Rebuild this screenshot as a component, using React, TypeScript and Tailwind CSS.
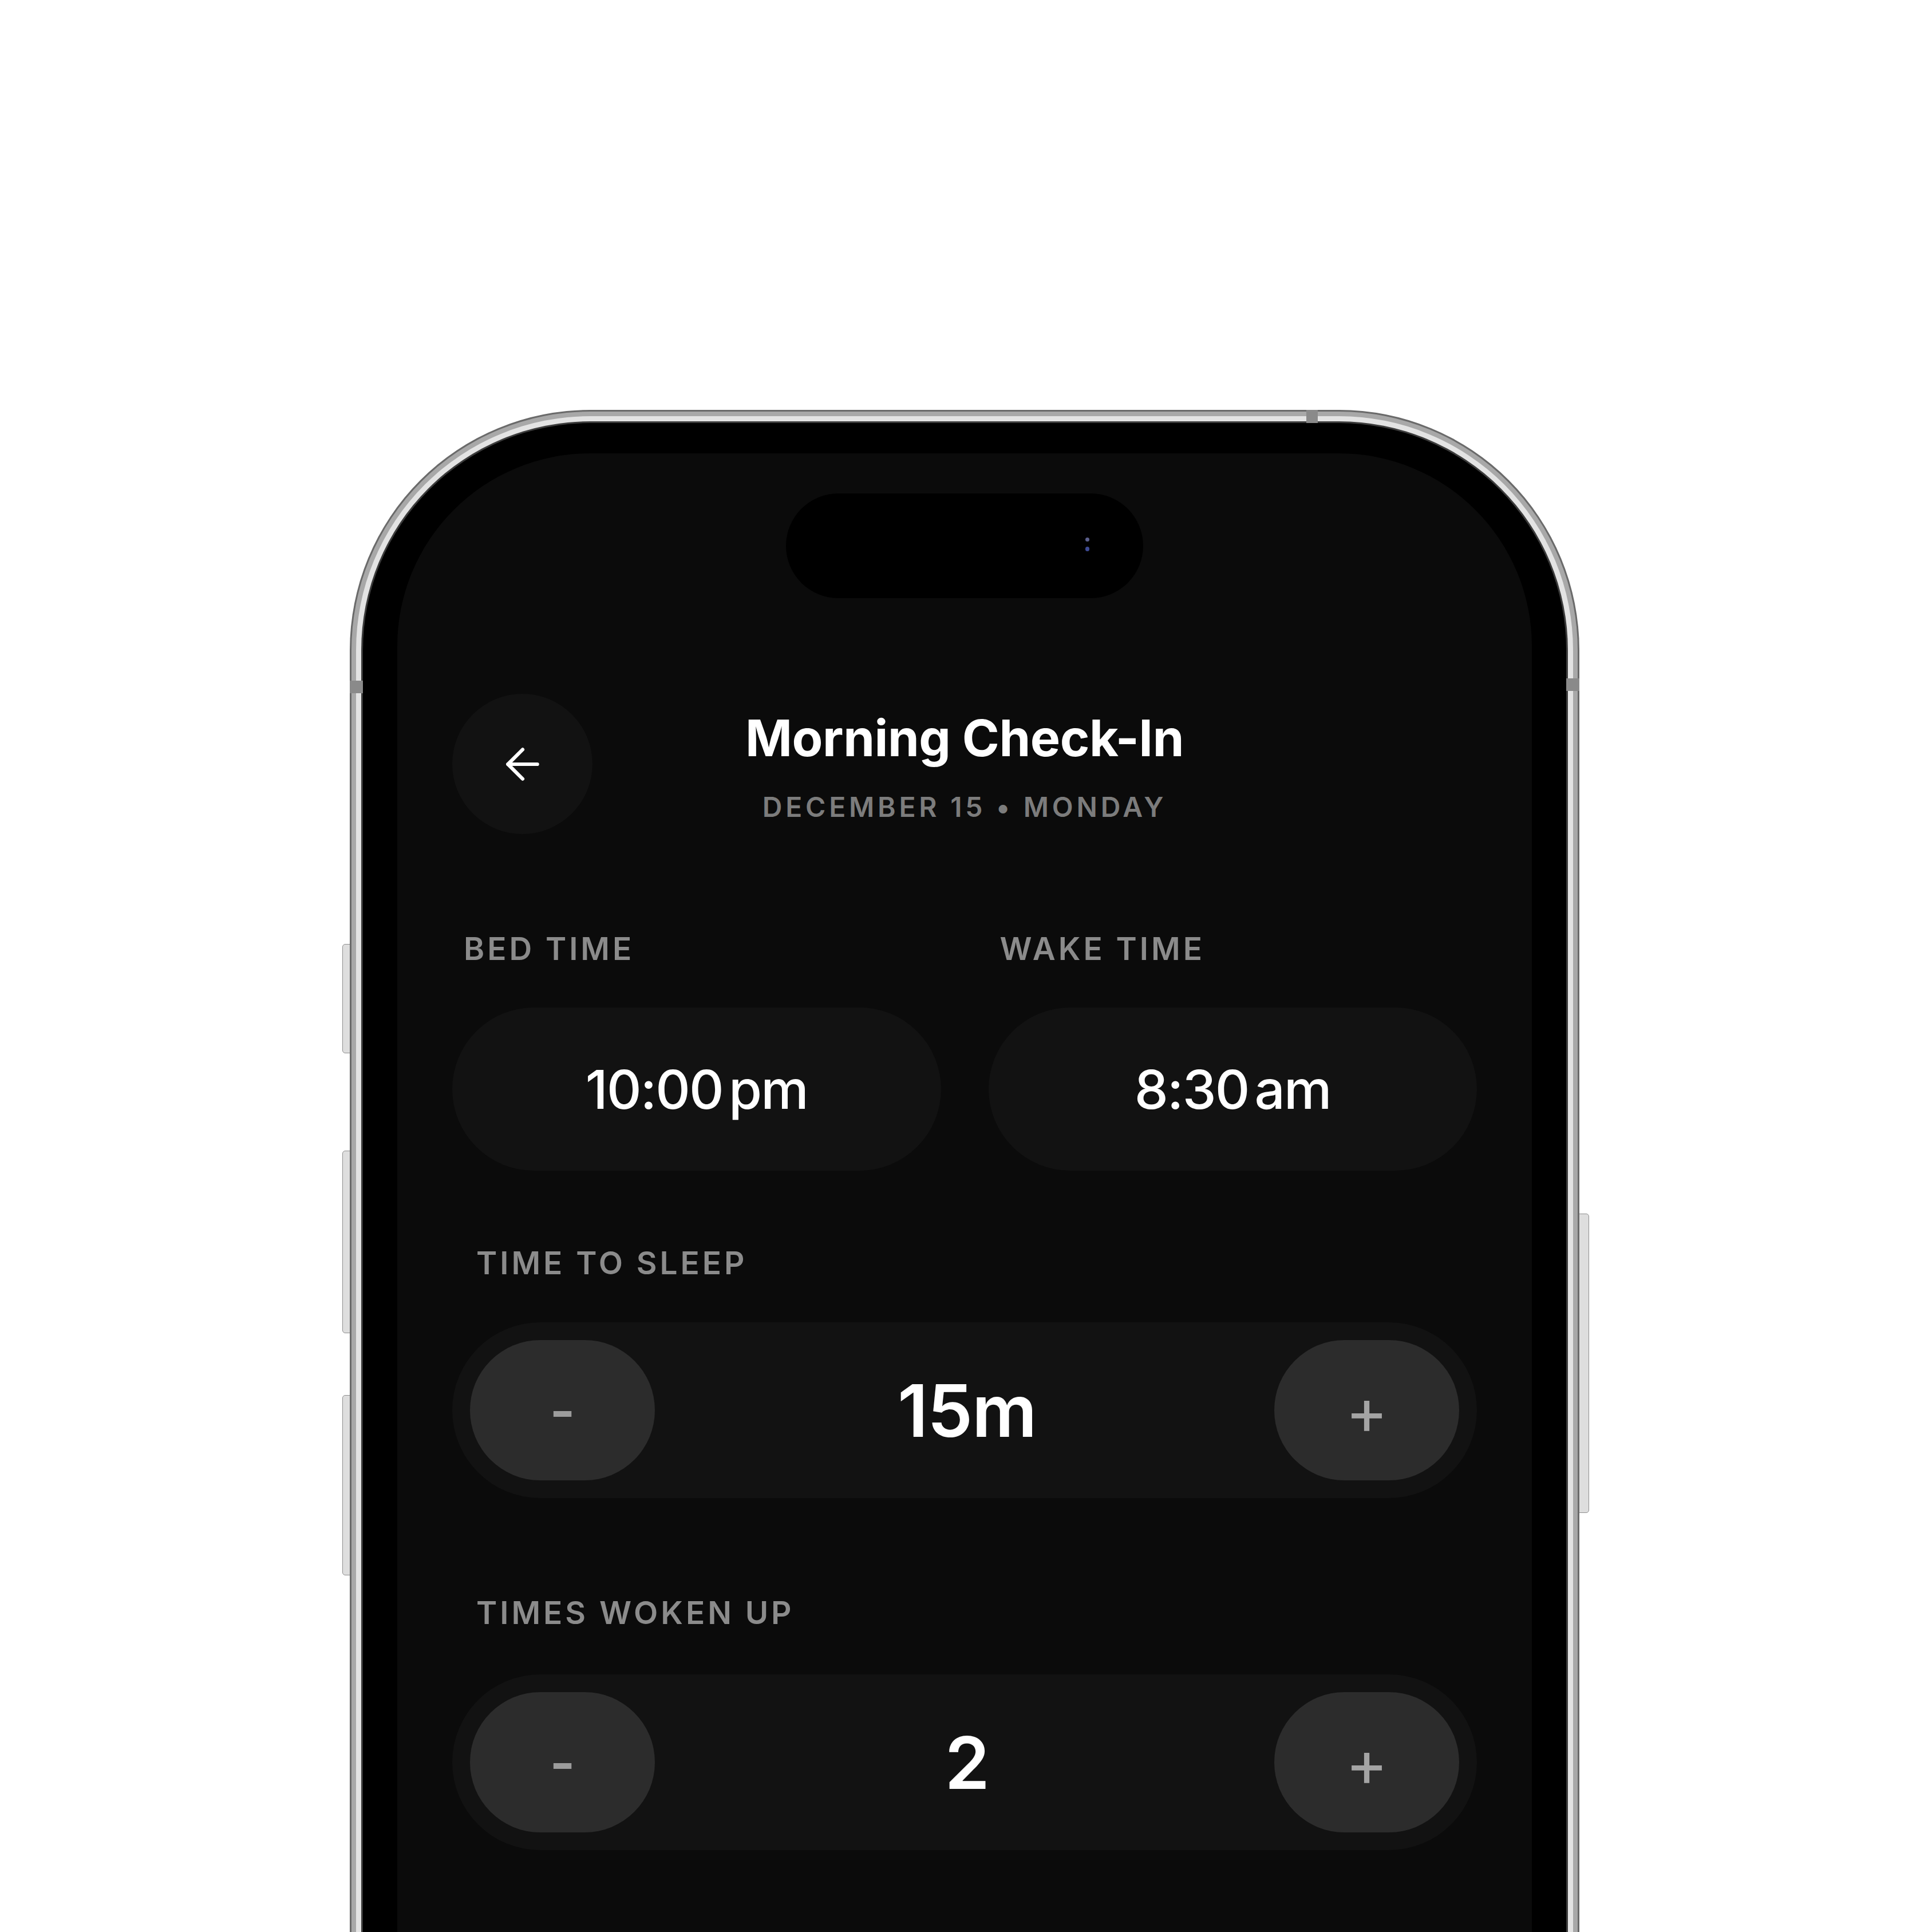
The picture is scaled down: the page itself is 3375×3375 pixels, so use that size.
import { ArrowLeft } from "lucide-react";

const timeSlots = [
  { label: "Bed Time", value: "10:00", suffix: "pm" },
  { label: "Wake Time", value: "8:30", suffix: "am" },
];

const counters = [
  { label: "Time to Sleep", value: "15m" },
  { label: "Times Woken Up", value: "2" },
];

const Stepper = ({ label, value, first }: { label: string; value: string; first: boolean }) => (
  <section className={first ? "mt-[134px]" : "mt-[173px]"}>
    <h3 className="pl-[42px] text-[55px] font-semibold uppercase leading-none tracking-[0.09em] text-[#8b8b8b]">
      {label}
    </h3>
    <div className={`${first ? "mt-[76px]" : "mt-[80px]"} flex h-[307px] items-center justify-between rounded-full bg-[#121212] px-[31px]`}>
      <button className="flex h-[245px] w-[323px] items-center justify-center rounded-full bg-[#2c2c2c] text-[96px] font-semibold leading-none text-[#9c9c9c]">
        -
      </button>
      <span className="pl-[8px] text-[126px] font-semibold leading-none tracking-[-0.01em] text-white">{value}</span>
      <button className="flex h-[245px] w-[323px] items-center justify-center rounded-full bg-[#2c2c2c] text-[112px] font-normal leading-none text-[#a4a4a4]">
        +
      </button>
    </div>
  </section>
);

export default function App() {
  return (
    <div className="h-[3375px] w-[3375px] overflow-hidden bg-white pl-[611px] pt-[716px] font-[Inter,sans-serif]">
      <div className="relative w-[2148px]">
        {/* side buttons */}
        <div className="absolute left-[-13px] top-[933px] h-[191px] w-[15px] rounded-l-[5px] border border-[#8e8e8e] bg-[#dedede]" />
        <div className="absolute left-[-13px] top-[1294px] h-[319px] w-[15px] rounded-l-[5px] border border-[#8e8e8e] bg-[#dedede]" />
        <div className="absolute left-[-13px] top-[1721px] h-[315px] w-[15px] rounded-l-[5px] border border-[#8e8e8e] bg-[#dedede]" />
        <div className="absolute right-[-17px] top-[1404px] h-[523px] w-[19px] rounded-r-[5px] border border-[#8e8e8e] bg-[#dedede]" />

        {/* titanium band */}
        <div className="relative rounded-[420px] bg-[#6a6a6a] p-[3px]">
          <div className="rounded-[417px] bg-[#a8a8a8] p-[8px]">
            <div className="rounded-[409px] bg-[#e3e3e3] p-[9px]">
              <div className="rounded-[400px] bg-[#3c3c3c] p-[3px]">
                <div className="rounded-[397px] bg-black px-[60px] pt-[53px]">
                  <div className="min-h-[3300px] rounded-[337px] bg-[#0b0b0b] px-[96px] pt-[70px]">
                    {/* dynamic island */}
                    <div className="relative mx-auto h-[183px] w-[624px] rounded-full bg-black">
                      <span className="absolute left-[523px] top-[77px] h-[7px] w-[7px] rounded-full bg-[#5b5f8c]" />
                      <span className="absolute left-[523px] top-[93px] h-[8px] w-[7px] rounded-full bg-[#3d4a93]" />
                    </div>

                    <header className="mt-[167px] grid h-[245px] grid-cols-[245px_1fr_245px] items-center">
                      <button className="flex h-[245px] w-[245px] items-center justify-center rounded-full bg-[#121212] text-white">
                        <ArrowLeft size={88} strokeWidth={1.7} />
                      </button>
                      <div className="flex flex-col items-center pt-[10px]">
                        <h1 className="text-[88px] font-bold leading-none tracking-[-0.005em] text-white">
                          Morning Check-In
                        </h1>
                        <p className="mt-[53px] text-[48px] font-semibold uppercase leading-none tracking-[0.12em] text-[#7c7c7c]">
                          December 15 • Monday
                        </p>
                      </div>
                      <div />
                    </header>

                    <div className="mt-[173px] grid grid-cols-2 gap-[83px]">
                      {timeSlots.map((slot) => (
                        <div key={slot.label}>
                          <h3 className="pl-[20px] text-[55px] font-semibold uppercase leading-none tracking-[0.09em] text-[#8b8b8b]">
                            {slot.label}
                          </h3>
                          <div className="mt-[75px] flex h-[285px] items-center justify-center rounded-full bg-[#121212] text-[94px] font-medium leading-none tracking-[-0.02em] text-white">
                            {slot.value}
                            <span className="ml-[10px]">{slot.suffix}</span>
                          </div>
                        </div>
                      ))}
                    </div>

                    {counters.map((c, i) => (
                      <Stepper key={c.label} label={c.label} value={c.value} first={i === 0} />
                    ))}
                  </div>
                </div>
              </div>
            </div>
          </div>
          {/* antenna lines */}
          <div className="absolute left-0 top-[473px] h-[22px] w-[23px] bg-[#8a8a8a]" />
          <div className="absolute right-0 top-[469px] h-[22px] w-[23px] bg-[#8a8a8a]" />
          <div className="absolute left-[1671px] top-0 h-[23px] w-[20px] bg-[#8a8a8a]" />
        </div>
      </div>
    </div>
  );
}
